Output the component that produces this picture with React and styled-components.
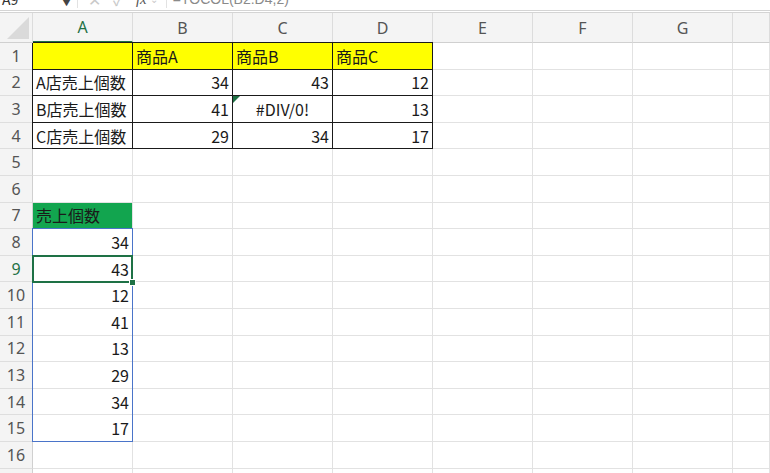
import React from "react";
import styled, { createGlobalStyle } from "styled-components";

const ROW_H = 26.6;
const HEAD_H = 30;
const BAR_H = 12;
const ROWHEAD_W = 33;
const COL_W = 100;

const GlobalStyle = createGlobalStyle`
    html, body {
        margin: 0;
        padding: 0;
        background: #ffffff;
        overflow: hidden;
    }
    body {
        font-family: "Noto Sans CJK JP", "Noto Sans", "Liberation Sans", sans-serif;
    }
`;

const Page = styled.div`
    width: 770px;
    height: 473px;
    overflow: hidden;
    position: relative;
    background: #ffffff;
`;

const FormulaBar = styled.div`
    height: ${BAR_H - 2}px;
    display: flex;
    align-items: flex-start;
    overflow: hidden;
    border-bottom: 1px solid #d4d4d4;
    color: #333;
    font-size: 14px;
    line-height: 16px;
    .inner {
        display: flex;
        align-items: center;
        margin-top: -10px;
        height: 18px;
    }
`;

const NameBox = styled.div`
    width: 78px;
    display: flex;
    justify-content: space-between;
    align-items: center;
    padding: 0 6px 0 2px;
    box-sizing: border-box;
    border-right: 1px solid #e2e2e2;
    height: 18px;
    .caret {
        font-size: 9px;
        color: #444;
        margin-top: 8px;
    }
`;

const BarIcon = styled.span`
    color: ${(p) => p.$color || "#c9c9c9"};
    font-size: ${(p) => p.$size || 16}px;
    margin-left: ${(p) => p.$gap || 0}px;
    font-style: ${(p) => (p.$italic ? "italic" : "normal")};
    font-family: ${(p) => (p.$italic ? '"Liberation Serif", serif' : "inherit")};
`;

const FormulaText = styled.div`
    margin-left: 8px;
    padding-left: 6px;
    border-left: 1px solid #e2e2e2;
    color: #8a8a8a;
    font-family: "Liberation Sans", sans-serif;
    font-size: 14px;
    height: 18px;
    line-height: 18px;
`;

const Gap = styled.div`
    height: 1px;
    border-bottom: 1px solid #d4d4d4;
`;

const Sheet = styled.div`
    position: relative;
    display: grid;
    grid-template-columns: ${ROWHEAD_W}px repeat(7, ${COL_W}px) 1fr;
    grid-template-rows: ${HEAD_H}px repeat(17, ${ROW_H}px);
    background: #ffffff;
`;

const Corner = styled.div`
    background: #f4f4f4;
    border-right: 1px solid #dcdcdc;
    border-bottom: 1px solid #d0d0d0;
    position: relative;
    svg {
        position: absolute;
        right: 3px;
        bottom: 3px;
    }
`;

const ColHead = styled.div`
    background: #f4f4f4;
    border-right: 1px solid #dcdcdc;
    border-bottom: ${(p) => (p.$active ? "2px solid #1e7145" : "1px solid #d0d0d0")};
    color: ${(p) => (p.$active ? "#1e7145" : "#555")};
    font-family: "Noto Sans", "Liberation Sans", sans-serif;
    font-size: 16px;
    display: flex;
    align-items: center;
    justify-content: center;
    box-sizing: border-box;
`;

const RowHead = styled.div`
    background: #f4f4f4;
    border-right: 1px solid #d0d0d0;
    border-bottom: 1px solid #dedede;
    color: ${(p) => (p.$active ? "#1e7145" : "#555")};
    font-family: "Noto Sans", "Liberation Sans", sans-serif;
    font-size: 16px;
    display: flex;
    align-items: center;
    justify-content: center;
    box-sizing: border-box;
`;

const Cell = styled.div`
    position: relative;
    background: ${(p) => p.$fill || "#ffffff"};
    border-right: 1px solid ${(p) => (p.$boxed ? "#1a1a1a" : "#e2e2e2")};
    border-bottom: 1px solid ${(p) => (p.$boxed ? "#1a1a1a" : "#e2e2e2")};
    box-shadow: ${(p) =>
        [p.$top && "0 -1px 0 #1a1a1a", p.$left && "-1px 0 0 #1a1a1a"]
            .filter(Boolean)
            .join(", ") || "none"};
    z-index: ${(p) => (p.$boxed ? 1 : 0)};
    box-sizing: border-box;
    display: flex;
    align-items: center;
    justify-content: ${(p) =>
        p.$align === "right" ? "flex-end" : p.$align === "center" ? "center" : "flex-start"};
    padding: 0 3px 0 3px;
    font-size: 16px;
    color: #1a1a1a;
    white-space: nowrap;
`;

const ErrorFlag = styled.span`
    position: absolute;
    left: 0;
    top: 0;
    width: 0;
    height: 0;
    border-top: 7px solid #1e7145;
    border-right: 7px solid transparent;
`;

const RangeFrame = styled.div`
    position: absolute;
    border: 1px solid #4a74c9;
    pointer-events: none;
    z-index: 2;
`;

const ActiveFrame = styled.div`
    position: absolute;
    border: 2px solid #1e7145;
    pointer-events: none;
    z-index: 3;
    &::after {
        content: "";
        position: absolute;
        right: -5px;
        bottom: -5px;
        width: 5px;
        height: 5px;
        background: #1e7145;
        border: 1px solid #fff;
    }
`;

const COLS = ["A", "B", "C", "D", "E", "F", "G", ""];

const YELLOW = "#ffff00";
const GREEN = "#12a54f";

const t = (v, align = "left", extra = {}) => ({ v, align, ...extra });

const data = {
    1: [t("", "left", { fill: YELLOW }), t("商品A", "left", { fill: YELLOW }), t("商品B", "left", { fill: YELLOW }), t("商品C", "left", { fill: YELLOW })],
    2: [t("A店売上個数"), t("34", "right"), t("43", "right"), t("12", "right")],
    3: [t("B店売上個数"), t("41", "right"), t("#DIV/0!", "center", { flag: true }), t("13", "right")],
    4: [t("C店売上個数"), t("29", "right"), t("34", "right"), t("17", "right")],
    7: [t("売上個数", "left", { fill: GREEN })],
    8: [t("34", "right")],
    9: [t("43", "right")],
    10: [t("12", "right")],
    11: [t("41", "right")],
    12: [t("13", "right")],
    13: [t("29", "right")],
    14: [t("34", "right")],
    15: [t("17", "right")],
};

const rowTop = (r) => HEAD_H + (r - 1) * ROW_H;
const colLeft = (c) => ROWHEAD_W + c * COL_W;

const App = () => {
    const rows = Array.from({ length: 17 }, (_, i) => i + 1);
    return (
        <Page>
            <GlobalStyle />
            <FormulaBar>
                <div className="inner">
                    <NameBox>
                        <span>A9</span>
                        <span className="caret">▼</span>
                    </NameBox>
                    <BarIcon $gap={10}>✕</BarIcon>
                    <BarIcon $gap={12}>✓</BarIcon>
                    <BarIcon $gap={12} $italic $color="#555" $size={15}>
                        fx
                    </BarIcon>
                    <BarIcon $gap={3} $size={10}>
                        ⌄
                    </BarIcon>
                    <FormulaText>=TOCOL(B2:D4,2)</FormulaText>
                </div>
            </FormulaBar>
            <Gap />
            <Sheet>
                <Corner>
                    <svg width="22" height="22" viewBox="0 0 22 22">
                        <polygon points="22,0 22,22 0,22" fill="#dadada" />
                    </svg>
                </Corner>
                {COLS.map((c, i) => (
                    <ColHead key={"h" + i} $active={c === "A"}>
                        {c}
                    </ColHead>
                ))}
                {rows.map((r) => {
                    const row = data[r] || [];
                    const inTable = r <= 4;
                    return (
                        <React.Fragment key={r}>
                            <RowHead $active={r === 9}>{r}</RowHead>
                            {COLS.map((c, ci) => {
                                const cell = row[ci];
                                const boxed = inTable && ci < 4;
                                return (
                                    <Cell
                                        key={r + "-" + ci}
                                        $fill={cell && cell.fill}
                                        $align={cell && cell.align}
                                        $boxed={boxed}
                                        $top={boxed && r === 1}
                                        $left={boxed && ci === 0}
                                    >
                                        {cell && cell.flag && <ErrorFlag />}
                                        {cell ? cell.v : ""}
                                    </Cell>
                                );
                            })}
                        </React.Fragment>
                    );
                })}
                <RangeFrame
                    style={{
                        left: colLeft(0) - 1,
                        top: rowTop(8) - 1,
                        width: COL_W - 1,
                        height: ROW_H * 8 - 1,
                    }}
                />
                <ActiveFrame
                    style={{
                        left: colLeft(0) - 1,
                        top: rowTop(9) - 1,
                        width: COL_W - 3,
                        height: ROW_H - 2,
                    }}
                />
            </Sheet>
        </Page>
    );
};

export default App;
